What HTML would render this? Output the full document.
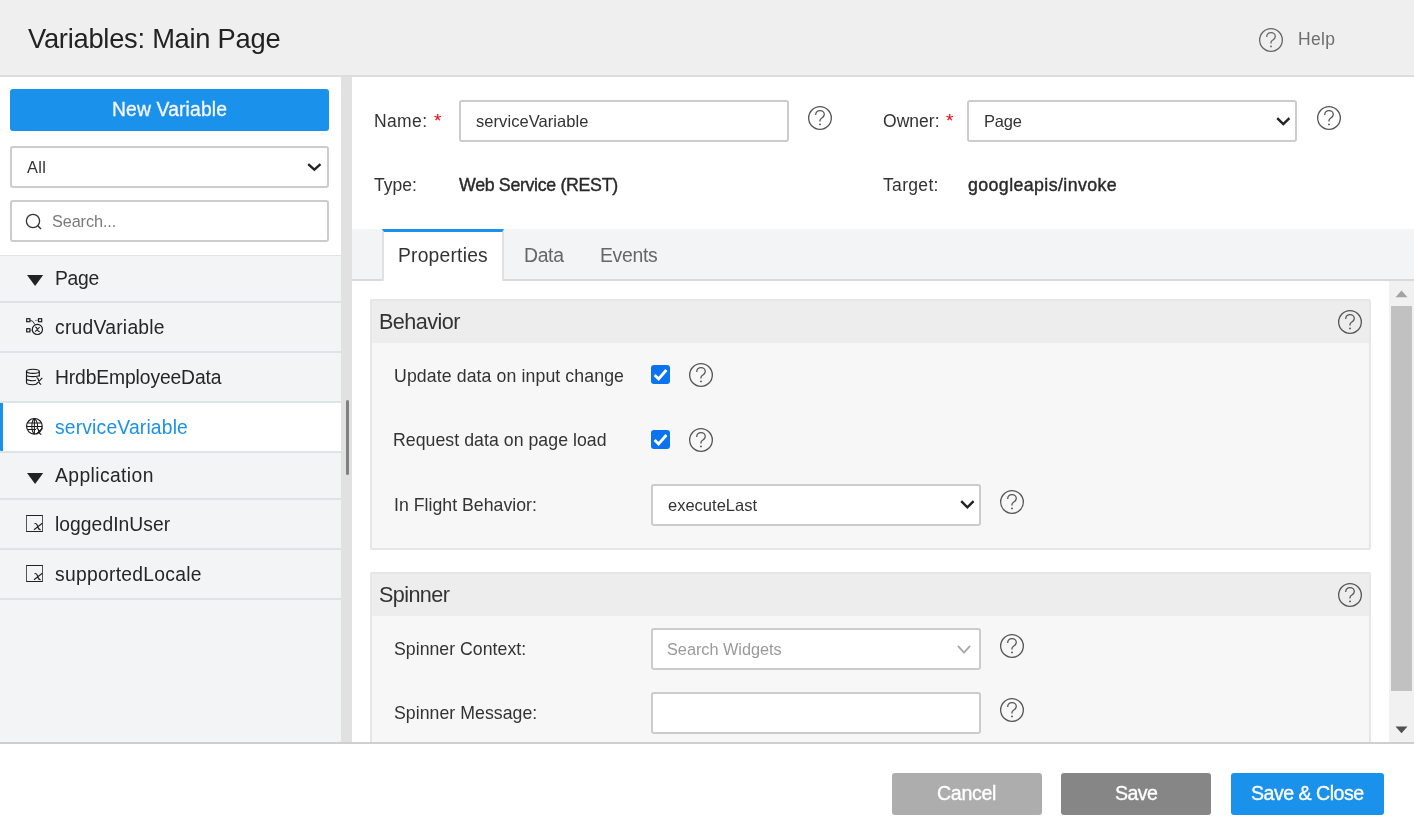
<!DOCTYPE html>
<html><head><meta charset="utf-8">
<style>
*{box-sizing:border-box;margin:0;padding:0}
html,body{width:1414px;height:839px;overflow:hidden;background:#fff;font-family:"Liberation Sans",sans-serif;color:#333}
.b{position:absolute}
.t{position:absolute;line-height:1;white-space:nowrap;will-change:transform}
svg{position:absolute;overflow:visible}
</style></head><body>
<div class="b" style="left:0px;top:0px;width:1414px;height:75px;background:#efefef;"></div>
<div class="b" style="left:0px;top:75px;width:1414px;height:2px;background:#dcdcdc;"></div>
<div class="t" style="left:27.68px;top:24.89px;font-size:27.3px;letter-spacing:-0.255px;color:#222;font-weight:normal;">Variables: Main Page</div>
<svg style="left:1258.6px;top:28.2px" width="24" height="24" viewBox="0 0 24 24"><circle cx="12" cy="12" r="11.35" fill="none" stroke="#666" stroke-width="1.3"/><path d="M7.7,8.9 C7.7,6.3 9.6,4.7 12,4.7 C14.4,4.7 16.3,6.4 16.3,8.6 C16.3,10.5 15,11.4 13.6,12.2 C12.5,12.8 12,13.5 12,14.6 L12,15.6" fill="none" stroke="#666" stroke-width="1.3"/><circle cx="12" cy="18.4" r="0.95" fill="#666"/></svg>
<div class="t" style="left:1297.81px;top:31.19px;font-size:17.5px;letter-spacing:0.352px;color:#6e6e6e;font-weight:normal;">Help</div>
<div class="b" style="left:0px;top:77px;width:341px;height:665px;background:#f3f4f6;"></div>
<div class="b" style="left:0px;top:77px;width:341px;height:178px;background:#fff;"></div>
<div class="b" style="left:341px;top:77px;width:11px;height:665px;background:#e1e1e1;"></div>
<div class="b" style="left:346px;top:400px;width:3px;height:75px;background:#808080;border-radius:1.5px"></div>
<div class="b" style="left:10px;top:89px;width:319px;height:42px;background:#1a91eb;border:none;border-radius:3px;"></div>
<div class="t" style="left:112.37px;top:99.66px;font-size:19.3px;letter-spacing:0.156px;color:#f6f6f6;font-weight:normal;-webkit-text-stroke:0.35px #f6f6f6;">New Variable</div>
<div class="b" style="left:10px;top:146px;width:319px;height:42px;background:#fff;border:2px solid #ccc;border-radius:3px;"></div>
<div class="t" style="left:27.06px;top:159.20px;font-size:16.3px;letter-spacing:0.329px;color:#333;font-weight:normal;">All</div>
<svg style="left:307.4px;top:162.5px" width="14.7" height="7.8" viewBox="0 0 14.7 7.8"><path d="M1.20,1.20 L7.35,6.60 L13.50,1.20" fill="none" stroke="#222" stroke-width="2.4"/></svg>
<div class="b" style="left:10px;top:200px;width:319px;height:42px;background:#fff;border:2px solid #ccc;border-radius:3px;"></div>
<svg style="left:25.3px;top:213px" width="18" height="18" viewBox="0 0 18 18"><circle cx="8" cy="8" r="6.6" fill="none" stroke="#333" stroke-width="1.3"/><path d="M12.8,12.8 L16,16" stroke="#333" stroke-width="1.4"/></svg>
<div class="t" style="left:51.67px;top:213.20px;font-size:16.3px;letter-spacing:-0.116px;color:#7a7a7a;font-weight:normal;">Search...</div>
<div class="b" style="left:0px;top:255px;width:341px;height:1px;background:#e3e3e3;"></div>
<div class="t" style="left:55.14px;top:268.66px;font-size:19.3px;letter-spacing:-0.241px;color:#262626;font-weight:normal;">Page</div>
<svg style="left:26.8px;top:275.4px" width="16.2" height="11" viewBox="0 0 16.2 11"><path d="M0,0 L16.2,0 L8.1,10.9 Z" fill="#222"/></svg>
<div class="b" style="left:0px;top:301px;width:341px;height:2px;background:#dde4e7;"></div>
<div class="t" style="left:55.32px;top:317.66px;font-size:19.3px;letter-spacing:0.252px;color:#262626;font-weight:normal;">crudVariable</div>
<svg style="left:25px;top:317px" width="19" height="19" viewBox="0 0 19 19"><rect x="1.7" y="1.7" width="3.2" height="3" fill="none" stroke="#1a1a1a" stroke-width="1.15"/><rect x="13.5" y="1.7" width="3.2" height="3" fill="none" stroke="#1a1a1a" stroke-width="1.15"/><rect x="1.7" y="11.7" width="3.2" height="3.2" fill="none" stroke="#1a1a1a" stroke-width="1.15"/><path d="M5,3.2 Q8.5,3.5 9.8,7.5" fill="none" stroke="#333" stroke-width="1"/><path d="M10.5,3.5 L13,3.2" fill="none" stroke="#333" stroke-width="1" stroke-dasharray="1,1"/><path d="M5,13.3 L6.5,13.3" fill="none" stroke="#444" stroke-width="1"/><circle cx="12.4" cy="12.4" r="5.1" fill="none" stroke="#1a1a1a" stroke-width="1.15"/><path d="M10.3,10.2 Q11.6,9.8 12.4,12.4 Q13.2,15 14.7,14.6 M10.2,14.6 L14.6,10.2" fill="none" stroke="#1a1a1a" stroke-width="1.05"/></svg>
<div class="b" style="left:0px;top:351px;width:341px;height:2px;background:#dde4e7;"></div>
<div class="t" style="left:55.42px;top:367.66px;font-size:19.3px;letter-spacing:-0.118px;color:#262626;font-weight:normal;">HrdbEmployeeData</div>
<svg style="left:25px;top:367px" width="19" height="19" viewBox="0 0 19 19"><ellipse cx="7.9" cy="4.3" rx="6.4" ry="2.1" fill="none" stroke="#1a1a1a" stroke-width="1.15"/><path d="M1.5,4.3 V15.5 C1.5,17 4.5,17.7 7.9,17.7 C9.5,17.7 10.5,17.5 11.5,17.3" fill="none" stroke="#1a1a1a" stroke-width="1.15"/><path d="M14.3,4.3 V9.6" fill="none" stroke="#1a1a1a" stroke-width="1.15"/><path d="M1.5,8.2 C1.5,10 14.3,10 14.3,8.2" fill="none" stroke="#1a1a1a" stroke-width="1.15"/><path d="M1.5,12 C1.5,13.8 9,14 11,13.3" fill="none" stroke="#1a1a1a" stroke-width="1.15"/><path d="M11.3,10.8 Q12.8,10.3 13.6,13.5 Q14.4,17.4 16.2,17.3 M11.2,17.2 L17.3,10.8" fill="none" stroke="#1a1a1a" stroke-width="1.15"/></svg>
<div class="b" style="left:0px;top:401px;width:341px;height:2px;background:#dde4e7;"></div>
<div class="b" style="left:0px;top:403px;width:341px;height:48px;background:#fff;"></div>
<div class="b" style="left:0px;top:403px;width:3px;height:48px;background:#1a91eb;border-bottom-left-radius:1px"></div>
<div class="t" style="left:55.32px;top:417.66px;font-size:19.3px;letter-spacing:0.173px;color:#1a91eb;font-weight:normal;">serviceVariable</div>
<svg style="left:25px;top:417px" width="19" height="19" viewBox="0 0 19 19"><circle cx="9.4" cy="9.3" r="7.8" fill="none" stroke="#1a1a1a" stroke-width="1.2"/><path d="M1.6,9.5 H17.2 M3,6 H15.8 M3,12.5 H11" fill="none" stroke="#1a1a1a" stroke-width="1.15"/><path d="M9.4,1.5 C6,4 6,14.5 9.4,17.1 M9.4,1.5 C12.8,4 12.8,9 12.3,11 M9.4,1.5 V17" fill="none" stroke="#1a1a1a" stroke-width="1.05"/><path d="M11.5,11.5 Q13,11 13.8,14 Q14.5,17.5 16.3,17.3 M11.4,17.2 L17.4,11.3" fill="none" stroke="#1a1a1a" stroke-width="1.2"/></svg>
<div class="b" style="left:0px;top:451px;width:341px;height:2px;background:#dde4e7;"></div>
<div class="t" style="left:54.75px;top:465.66px;font-size:19.3px;letter-spacing:0.406px;color:#262626;font-weight:normal;">Application</div>
<svg style="left:26.8px;top:472.5px" width="16.2" height="11" viewBox="0 0 16.2 11"><path d="M0,0 L16.2,0 L8.1,10.9 Z" fill="#222"/></svg>
<div class="b" style="left:0px;top:498px;width:341px;height:2px;background:#dde4e7;"></div>
<div class="t" style="left:55.26px;top:514.66px;font-size:19.3px;letter-spacing:0.040px;color:#262626;font-weight:normal;">loggedInUser</div>
<svg style="left:25px;top:515px" width="19" height="19" viewBox="0 0 19 19"><path d="M1,0.5 H18 M1,16.5 H18" stroke="#222" stroke-width="1"/><path d="M1.5,0.5 V16.5 M17.5,0.5 V16.5" stroke="#555" stroke-width="1"/><path d="M9.5,8.7 Q11.5,7.8 12.7,11.5 Q13.6,15 15.6,14.6 M9,14.8 L17.3,8.2" fill="none" stroke="#222" stroke-width="1.1"/></svg>
<div class="b" style="left:0px;top:548px;width:341px;height:2px;background:#dde4e7;"></div>
<div class="t" style="left:55.32px;top:564.66px;font-size:19.3px;letter-spacing:0.285px;color:#262626;font-weight:normal;">supportedLocale</div>
<svg style="left:25px;top:565px" width="19" height="19" viewBox="0 0 19 19"><path d="M1,0.5 H18 M1,16.5 H18" stroke="#222" stroke-width="1"/><path d="M1.5,0.5 V16.5 M17.5,0.5 V16.5" stroke="#555" stroke-width="1"/><path d="M9.5,8.7 Q11.5,7.8 12.7,11.5 Q13.6,15 15.6,14.6 M9,14.8 L17.3,8.2" fill="none" stroke="#222" stroke-width="1.1"/></svg>
<div class="b" style="left:0px;top:598px;width:341px;height:2px;background:#dde4e7;"></div>
<div class="t" style="left:374.29px;top:113.19px;font-size:17.5px;letter-spacing:0.369px;color:#333;font-weight:normal;">Name:</div>
<div class="t" style="left:433.50px;top:111.42px;font-size:19px;color:#ff0000;font-weight:normal;">*</div>
<div class="b" style="left:459px;top:100px;width:330px;height:42px;background:#fff;border:2px solid #ccc;border-radius:3px;"></div>
<div class="t" style="left:475.66px;top:113.03px;font-size:16.5px;letter-spacing:0.064px;color:#333;font-weight:normal;">serviceVariable</div>
<svg style="left:808.1px;top:106.0px" width="24" height="24" viewBox="0 0 24 24"><circle cx="12" cy="12" r="11.35" fill="none" stroke="#555" stroke-width="1.3"/><path d="M7.7,8.9 C7.7,6.3 9.6,4.7 12,4.7 C14.4,4.7 16.3,6.4 16.3,8.6 C16.3,10.5 15,11.4 13.6,12.2 C12.5,12.8 12,13.5 12,14.6 L12,15.6" fill="none" stroke="#555" stroke-width="1.3"/><circle cx="12" cy="18.4" r="0.95" fill="#555"/></svg>
<div class="t" style="left:882.66px;top:113.19px;font-size:17.5px;letter-spacing:0.026px;color:#333;font-weight:normal;">Owner:</div>
<div class="t" style="left:945.50px;top:111.42px;font-size:19px;color:#ff0000;font-weight:normal;">*</div>
<div class="b" style="left:967px;top:100px;width:330px;height:42px;background:#fff;border:2px solid #ccc;border-radius:3px;"></div>
<div class="t" style="left:983.90px;top:113.03px;font-size:16.5px;letter-spacing:-0.187px;color:#333;font-weight:normal;">Page</div>
<svg style="left:1275.9px;top:116.5px" width="14.6" height="8.4" viewBox="0 0 14.6 8.4"><path d="M1.20,1.20 L7.30,7.20 L13.40,1.20" fill="none" stroke="#222" stroke-width="2.4"/></svg>
<svg style="left:1316.6px;top:106.0px" width="24" height="24" viewBox="0 0 24 24"><circle cx="12" cy="12" r="11.35" fill="none" stroke="#555" stroke-width="1.3"/><path d="M7.7,8.9 C7.7,6.3 9.6,4.7 12,4.7 C14.4,4.7 16.3,6.4 16.3,8.6 C16.3,10.5 15,11.4 13.6,12.2 C12.5,12.8 12,13.5 12,14.6 L12,15.6" fill="none" stroke="#555" stroke-width="1.3"/><circle cx="12" cy="18.4" r="0.95" fill="#555"/></svg>
<div class="t" style="left:374.19px;top:177.19px;font-size:17.5px;letter-spacing:0.033px;color:#333;font-weight:normal;">Type:</div>
<div class="t" style="left:459.35px;top:177.03px;font-size:17.8px;letter-spacing:-0.329px;color:#2a2a2a;font-weight:normal;-webkit-text-stroke:0.4px #2a2a2a;">Web Service (REST)</div>
<div class="t" style="left:883.47px;top:177.19px;font-size:17.5px;letter-spacing:0.331px;color:#333;font-weight:normal;">Target:</div>
<div class="t" style="left:967.62px;top:177.03px;font-size:17.8px;letter-spacing:0.394px;color:#2a2a2a;font-weight:normal;-webkit-text-stroke:0.4px #2a2a2a;">googleapis/invoke</div>
<div class="b" style="left:352px;top:229px;width:1062px;height:50px;background:#f3f4f6;"></div>
<div class="b" style="left:352px;top:279px;width:1062px;height:2px;background:#d9d9d9;"></div>
<div class="b" style="left:382px;top:229px;width:122px;height:52px;background:#fff;border-left:2px solid #e1e1e1;border-right:2px solid #e1e1e1;border-top:3px solid #1a91eb"></div>
<div class="t" style="left:398.14px;top:245.66px;font-size:19.3px;letter-spacing:0.202px;color:#333;font-weight:normal;">Properties</div>
<div class="t" style="left:523.52px;top:245.92px;font-size:19.4px;letter-spacing:-0.338px;color:#666;font-weight:normal;">Data</div>
<div class="t" style="left:600.06px;top:245.92px;font-size:19.4px;letter-spacing:-0.314px;color:#666;font-weight:normal;">Events</div>
<div class="b" style="left:1389px;top:281px;width:25px;height:461px;background:#f1f1f1;"></div>
<div class="b" style="left:1391px;top:306px;width:21px;height:385px;background:#c1c1c1;"></div>
<svg style="left:1395px;top:290px" width="13" height="8" viewBox="0 0 13 8"><path d="M0.5,7.2 L12.5,7.2 L6.5,0.5 Z" fill="#a3a3a3"/></svg>
<svg style="left:1395px;top:726px" width="13" height="8" viewBox="0 0 13 8"><path d="M0.5,0.5 L12.5,0.5 L6.5,7.2 Z" fill="#505050"/></svg>
<div class="b" style="left:370px;top:299px;width:1001px;height:251px;background:#f7f7f7;border:2px solid #e6e6e6;border-radius:2px;"></div>
<div class="b" style="left:372px;top:301px;width:997px;height:42px;background:#ededed;"></div>
<div class="t" style="left:378.63px;top:310.65px;font-size:21.6px;letter-spacing:-0.552px;color:#333;font-weight:normal;">Behavior</div>
<svg style="left:1337.6px;top:310.0px" width="24" height="24" viewBox="0 0 24 24"><circle cx="12" cy="12" r="11.35" fill="none" stroke="#555" stroke-width="1.3"/><path d="M7.7,8.9 C7.7,6.3 9.6,4.7 12,4.7 C14.4,4.7 16.3,6.4 16.3,8.6 C16.3,10.5 15,11.4 13.6,12.2 C12.5,12.8 12,13.5 12,14.6 L12,15.6" fill="none" stroke="#555" stroke-width="1.3"/><circle cx="12" cy="18.4" r="0.95" fill="#555"/></svg>
<div class="t" style="left:393.92px;top:368.02px;font-size:17.7px;letter-spacing:0.106px;color:#333;font-weight:normal;">Update data on input change</div>
<div class="t" style="left:393.13px;top:432.02px;font-size:17.7px;letter-spacing:0.048px;color:#333;font-weight:normal;">Request data on page load</div>
<div class="t" style="left:394.02px;top:497.02px;font-size:17.7px;letter-spacing:0.021px;color:#333;font-weight:normal;">In Flight Behavior:</div>
<svg style="left:651px;top:365.0px" width="19" height="19" viewBox="0 0 19 19"><rect x="0" y="0" width="19" height="19" rx="3" fill="#0b72f0"/><path d="M3.6,10 L7.6,14 L15.4,5" fill="none" stroke="#fff" stroke-width="2.8"/></svg>
<svg style="left:651px;top:430.0px" width="19" height="19" viewBox="0 0 19 19"><rect x="0" y="0" width="19" height="19" rx="3" fill="#0b72f0"/><path d="M3.6,10 L7.6,14 L15.4,5" fill="none" stroke="#fff" stroke-width="2.8"/></svg>
<svg style="left:689.1px;top:363.0px" width="24" height="24" viewBox="0 0 24 24"><circle cx="12" cy="12" r="11.35" fill="none" stroke="#555" stroke-width="1.3"/><path d="M7.7,8.9 C7.7,6.3 9.6,4.7 12,4.7 C14.4,4.7 16.3,6.4 16.3,8.6 C16.3,10.5 15,11.4 13.6,12.2 C12.5,12.8 12,13.5 12,14.6 L12,15.6" fill="none" stroke="#555" stroke-width="1.3"/><circle cx="12" cy="18.4" r="0.95" fill="#555"/></svg>
<svg style="left:689.1px;top:428.0px" width="24" height="24" viewBox="0 0 24 24"><circle cx="12" cy="12" r="11.35" fill="none" stroke="#555" stroke-width="1.3"/><path d="M7.7,8.9 C7.7,6.3 9.6,4.7 12,4.7 C14.4,4.7 16.3,6.4 16.3,8.6 C16.3,10.5 15,11.4 13.6,12.2 C12.5,12.8 12,13.5 12,14.6 L12,15.6" fill="none" stroke="#555" stroke-width="1.3"/><circle cx="12" cy="18.4" r="0.95" fill="#555"/></svg>
<div class="b" style="left:651px;top:484px;width:330px;height:42px;background:#fff;border:2px solid #ccc;border-radius:3px;"></div>
<div class="t" style="left:667.68px;top:497.03px;font-size:16.5px;letter-spacing:0.005px;color:#333;font-weight:normal;">executeLast</div>
<svg style="left:959.6px;top:500.4px" width="14.8" height="8.6" viewBox="0 0 14.8 8.6"><path d="M1.20,1.20 L7.40,7.40 L13.60,1.20" fill="none" stroke="#222" stroke-width="2.4"/></svg>
<svg style="left:1000.1px;top:490.3px" width="24" height="24" viewBox="0 0 24 24"><circle cx="12" cy="12" r="11.35" fill="none" stroke="#555" stroke-width="1.3"/><path d="M7.7,8.9 C7.7,6.3 9.6,4.7 12,4.7 C14.4,4.7 16.3,6.4 16.3,8.6 C16.3,10.5 15,11.4 13.6,12.2 C12.5,12.8 12,13.5 12,14.6 L12,15.6" fill="none" stroke="#555" stroke-width="1.3"/><circle cx="12" cy="18.4" r="0.95" fill="#555"/></svg>
<div class="b" style="left:370px;top:572px;width:1001px;height:200px;background:#f7f7f7;border:2px solid #e6e6e6;border-radius:2px;"></div>
<div class="b" style="left:372px;top:574px;width:997px;height:42px;background:#ededed;"></div>
<div class="t" style="left:378.69px;top:583.65px;font-size:21.6px;letter-spacing:-0.602px;color:#333;font-weight:normal;">Spinner</div>
<svg style="left:1337.6px;top:583.0px" width="24" height="24" viewBox="0 0 24 24"><circle cx="12" cy="12" r="11.35" fill="none" stroke="#555" stroke-width="1.3"/><path d="M7.7,8.9 C7.7,6.3 9.6,4.7 12,4.7 C14.4,4.7 16.3,6.4 16.3,8.6 C16.3,10.5 15,11.4 13.6,12.2 C12.5,12.8 12,13.5 12,14.6 L12,15.6" fill="none" stroke="#555" stroke-width="1.3"/><circle cx="12" cy="18.4" r="0.95" fill="#555"/></svg>
<div class="t" style="left:393.81px;top:641.02px;font-size:17.7px;letter-spacing:0.024px;color:#333;font-weight:normal;">Spinner Context:</div>
<div class="t" style="left:393.81px;top:705.02px;font-size:17.7px;letter-spacing:0.045px;color:#333;font-weight:normal;">Spinner Message:</div>
<div class="b" style="left:651px;top:628px;width:330px;height:42px;background:#fff;border:2px solid #ccc;border-radius:3px;"></div>
<div class="t" style="left:667.15px;top:641.20px;font-size:16.3px;letter-spacing:-0.017px;color:#9a9a9a;font-weight:normal;">Search Widgets</div>
<svg style="left:957.4px;top:645.2px" width="14" height="8.5" viewBox="0 0 14 8.5"><path d="M0.90,0.90 L7.00,7.60 L13.10,0.90" fill="none" stroke="#a8a8a8" stroke-width="1.8"/></svg>
<svg style="left:999.9px;top:634.0px" width="24" height="24" viewBox="0 0 24 24"><circle cx="12" cy="12" r="11.35" fill="none" stroke="#555" stroke-width="1.3"/><path d="M7.7,8.9 C7.7,6.3 9.6,4.7 12,4.7 C14.4,4.7 16.3,6.4 16.3,8.6 C16.3,10.5 15,11.4 13.6,12.2 C12.5,12.8 12,13.5 12,14.6 L12,15.6" fill="none" stroke="#555" stroke-width="1.3"/><circle cx="12" cy="18.4" r="0.95" fill="#555"/></svg>
<div class="b" style="left:651px;top:692px;width:330px;height:42px;background:#fff;border:2px solid #ccc;border-radius:3px;"></div>
<svg style="left:999.9px;top:698.0px" width="24" height="24" viewBox="0 0 24 24"><circle cx="12" cy="12" r="11.35" fill="none" stroke="#555" stroke-width="1.3"/><path d="M7.7,8.9 C7.7,6.3 9.6,4.7 12,4.7 C14.4,4.7 16.3,6.4 16.3,8.6 C16.3,10.5 15,11.4 13.6,12.2 C12.5,12.8 12,13.5 12,14.6 L12,15.6" fill="none" stroke="#555" stroke-width="1.3"/><circle cx="12" cy="18.4" r="0.95" fill="#555"/></svg>
<div class="b" style="left:0px;top:742px;width:1414px;height:97px;background:#fff;"></div>
<div class="b" style="left:0px;top:742px;width:1414px;height:2px;background:#cfcfcf;"></div>
<div class="b" style="left:892px;top:773px;width:150px;height:42px;background:#adadad;border:none;border-radius:3px;"></div>
<div class="t" style="left:936.76px;top:783.92px;font-size:19.6px;letter-spacing:-0.321px;color:#fff;font-weight:normal;-webkit-text-stroke:0.35px #fff;">Cancel</div>
<div class="b" style="left:1061px;top:773px;width:150px;height:42px;background:#868686;border:none;border-radius:3px;"></div>
<div class="t" style="left:1114.60px;top:783.92px;font-size:19.6px;letter-spacing:-0.584px;color:#fff;font-weight:normal;-webkit-text-stroke:0.35px #fff;">Save</div>
<div class="b" style="left:1231px;top:773px;width:153px;height:42px;background:#1a91eb;border:none;border-radius:3px;"></div>
<div class="t" style="left:1251.02px;top:783.92px;font-size:19.6px;letter-spacing:-0.505px;color:#fff;font-weight:normal;-webkit-text-stroke:0.35px #fff;">Save &amp; Close</div>
</body></html>
